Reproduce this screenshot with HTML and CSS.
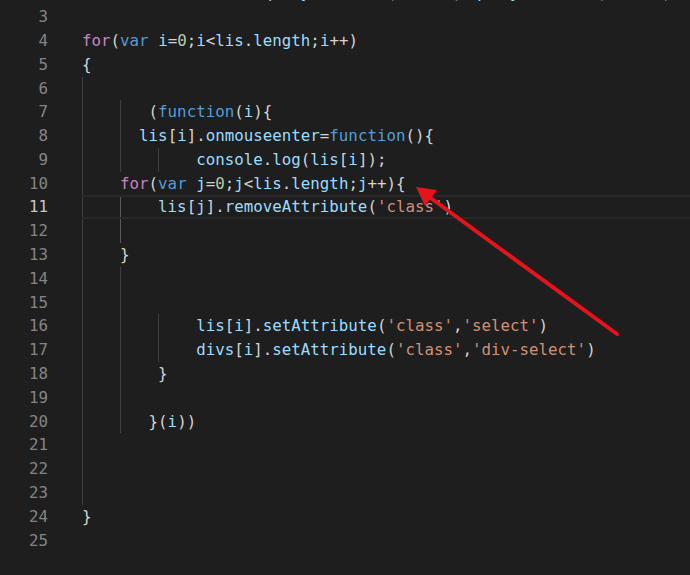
FILE: index.html
```html
<!DOCTYPE html>
<html>
<head>
<meta charset="utf-8">
<link rel="stylesheet" href="styles.css">
</head>
<body>
<div class="editor">
  <div class="row"><span class="ln">2</span><span class="code"><span class="kw">var</span> <span class="v">lis</span> = <span class="v">document</span>.<span class="v">querySelector</span>(<span class="s">'#box'</span>).<span class="v">querySelector</span>(<span class="s">'.ul1'</span>)</span></div>
  <div class="row"><span class="ln">3</span><span class="code"></span></div>
  <div class="row"><span class="ln">4</span><span class="code"><span class="ctl">for</span>(<span class="kw">var</span> <span class="v">i</span>=<span class="n">0</span>;<span class="v">i</span>&lt;<span class="v">lis</span>.<span class="v">length</span>;<span class="v">i</span>++)</span></div>
  <div class="row"><span class="ln">5</span><span class="code">{</span></div>
  <div class="row"><span class="ln">6</span><span class="code g0"></span></div>
  <div class="row"><span class="ln">7</span><span class="code g04">       (<span class="kw">function</span>(<span class="v">i</span>){</span></div>
  <div class="row"><span class="ln">8</span><span class="code g04">      <span class="v">lis</span>[<span class="v">i</span>].<span class="v">onmouseenter</span>=<span class="kw">function</span>(){</span></div>
  <div class="row"><span class="ln">9</span><span class="code g048">            <span class="v">console</span>.<span class="v">log</span>(<span class="v">lis</span>[<span class="v">i</span>]);</span></div>
  <div class="row"><span class="ln">10</span><span class="code g0">    <span class="ctl">for</span>(<span class="kw">var</span> <span class="v">j</span>=<span class="n">0</span>;<span class="v">j</span>&lt;<span class="v">lis</span>.<span class="v">length</span>;<span class="v">j</span>++){</span></div>
  <div class="row current"><span class="ln">11</span><span class="code g04a">        <span class="v">lis</span>[<span class="v">j</span>].<span class="v">removeAttribute</span>(<span class="s">'class'</span>)</span></div>
  <div class="row"><span class="ln">12</span><span class="code g04a"></span></div>
  <div class="row"><span class="ln">13</span><span class="code g0">    }</span></div>
  <div class="row"><span class="ln">14</span><span class="code g04"></span></div>
  <div class="row"><span class="ln">15</span><span class="code g04"></span></div>
  <div class="row"><span class="ln">16</span><span class="code g048">            <span class="v">lis</span>[<span class="v">i</span>].<span class="v">setAttribute</span>(<span class="s">'class'</span>,<span class="s">'select'</span>)</span></div>
  <div class="row"><span class="ln">17</span><span class="code g048">            <span class="v">divs</span>[<span class="v">i</span>].<span class="v">setAttribute</span>(<span class="s">'class'</span>,<span class="s">'div-select'</span>)</span></div>
  <div class="row"><span class="ln">18</span><span class="code g04">        }</span></div>
  <div class="row"><span class="ln">19</span><span class="code g04"></span></div>
  <div class="row"><span class="ln">20</span><span class="code g04">       }(<span class="v">i</span>))</span></div>
  <div class="row"><span class="ln">21</span><span class="code g0"></span></div>
  <div class="row"><span class="ln">22</span><span class="code g0"></span></div>
  <div class="row"><span class="ln">23</span><span class="code g0"></span></div>
  <div class="row"><span class="ln">24</span><span class="code">}</span></div>
  <div class="row"><span class="ln">25</span><span class="code"></span></div>
</div>
<svg class="arrow" width="690" height="575" viewBox="0 0 690 575">
  <line x1="617" y1="334" x2="428" y2="196" stroke="#e3141c" stroke-width="4" stroke-linecap="round"/>
  <polygon points="416,187 437,190 425,206" fill="#e3141c"/>
</svg>
</body>
</html>
```
FILE: styles.css
```css
html, body {
  margin: 0;
  padding: 0;
  background: #1e1e1e;
  overflow: hidden;
}
body {
  position: relative;
  width: 690px;
  height: 575px;
}
.editor {
  margin-top: -18.7px;
  display: flex;
  flex-direction: column;
  font-family: "DejaVu Sans Mono", "Liberation Mono", monospace;
  font-size: 15.8px;
  color: #d4d4d4;
}
.row {
  display: flex;
  height: 23.8px;
  line-height: 23.8px;
}
.ln {
  width: 48px;
  flex: none;
  text-align: right;
  color: #858585;
  margin-right: 34px;
}
.code {
  flex: 1;
  white-space: pre;
  background-repeat: no-repeat;
}
.current .ln { color: #c6c6c6; }
.current .code {
  box-shadow: inset 0 2px #282828, inset 0 -2px #282828;
}
.g0 {
  background-image: linear-gradient(#404040, #404040);
  background-size: 1px 100%;
  background-position: 0 0;
}
.g04 {
  background-image: linear-gradient(#404040, #404040), linear-gradient(#404040, #404040);
  background-size: 1px 100%, 1px 100%;
  background-position: 0 0, 4ch 0;
}
.g04a {
  background-image: linear-gradient(#404040, #404040), linear-gradient(#5a5a5a, #5a5a5a);
  background-size: 1px 100%, 1px 100%;
  background-position: 0 0, 4ch 0;
}
.g048 {
  background-image: linear-gradient(#404040, #404040), linear-gradient(#404040, #404040), linear-gradient(#404040, #404040);
  background-size: 1px 100%, 1px 100%, 1px 100%;
  background-position: 0 0, 4ch 0, 8ch 0;
}
.ctl { color: #c586c0; }
.kw { color: #569cd6; }
.v { color: #9cdcfe; }
.n { color: #b5cea8; }
.s { color: #ce9178; }
.arrow {
  position: absolute;
  left: 0;
  top: 0;
  pointer-events: none;
}
```
